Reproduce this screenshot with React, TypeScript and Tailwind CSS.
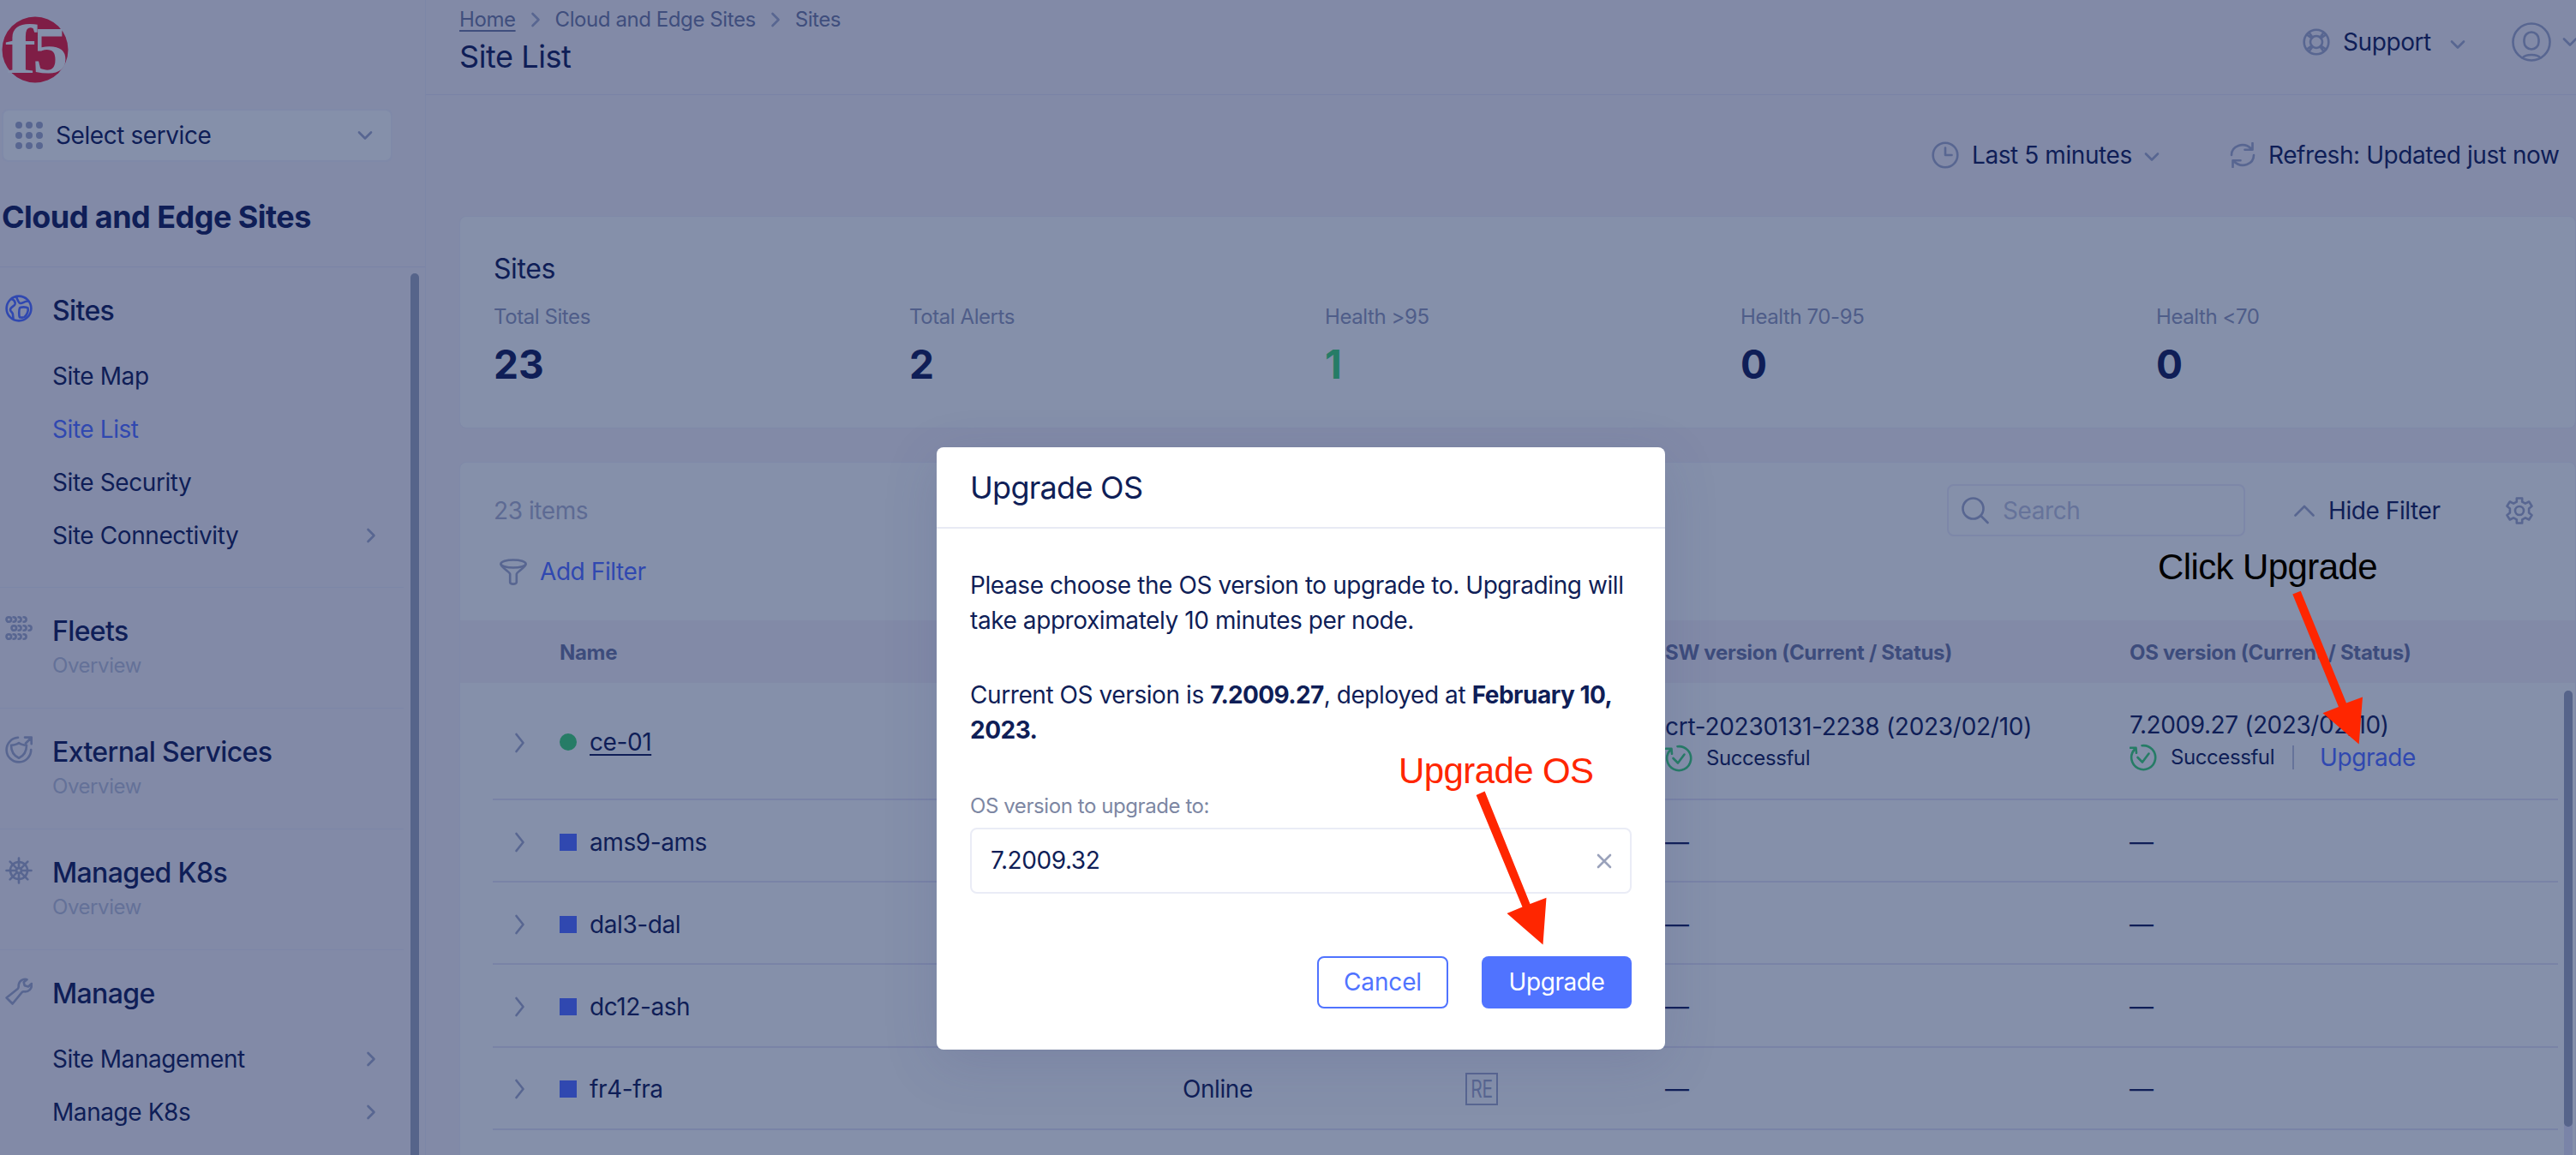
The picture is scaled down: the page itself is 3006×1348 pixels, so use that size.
import { type ReactNode } from "react";

interface IconProps {
  size?: number;
  className?: string;
  children: ReactNode;
}

const Icon = ({ size = 32, className = "text-[#586691]", children }: IconProps) => (
  <svg
    width={size}
    height={size}
    viewBox={`0 0 ${size} ${size}`}
    fill="none"
    stroke="currentColor"
    strokeWidth={2.6}
    strokeLinecap="round"
    strokeLinejoin="round"
    className={`shrink-0 ${className}`}
  >
    {children}
  </svg>
);

const ChevronDown = ({ className }: { className?: string }) => (
  <Icon size={18} className={className ?? "text-[#586691]"}>
    <path d="M2 5.5l7 7 7-7" />
  </Icon>
);

const ChevronRight = () => (
  <Icon size={18}>
    <path d="M5.5 2l7 7-7 7" />
  </Icon>
);

const ChevronExpand = () => (
  <Icon size={24}>
    <path d="M7.5 2l8 10-8 10" />
  </Icon>
);

const GlobeIcon = () => (
  <Icon className="text-[#3048b0]">
    <circle cx="16" cy="16" r="14.4" />
    <path d="M7.5 5c3 1 4.5 3 4 6-.5 2.5-5.5 3-5.5 6.5 0 2.500 3 2.500 3 5.500 0 2 .5 3 .5 5M13 2.500c1.500 3 2.500 7.500 5 7.500 3 0 3.500-2.500 9-2.500M17 15.500c1-1.500 8-1.500 9.500 0 1 3-1 8-4 10.500-1.500 1-3.500.5-5.500.5-1-2-1-9 0-11z" />
  </Icon>
);

const FleetsIcon = () => (
  <Icon>
    {[
      [3.8, 5],
      [9.8, 15],
      [3.8, 25],
    ].map(([x, y]) => (
      <g key={y} transform={`translate(${x} ${y})`}>
        <circle cx="0.5" cy="0" r="2.8" />
        <path d="M5.8-2.8c4 0 4 5.6 0 5.6M11.8-2.8c4 0 4 5.6 0 5.6M17.8-2.8c4 0 4 5.6 0 5.6" />
      </g>
    ))}
  </Icon>
);

const ExternalIcon = () => (
  <Icon>
    <path d="M15 1.800A14.300 14.300 0 1 0 30.200 16" />
    <path d="M16 8c2.500 2 5 2.500 9 2.700 0 7-2.500 12-9 15-6.500-3-9-8-9-15 4-.2 6.500-.7 9-2.700z" />
    <path d="M24 8.500l6.500-6.500M23 1.600h7.700v7.600" />
  </Icon>
);

const HelmIcon = () => (
  <Icon>
    <circle cx="16" cy="16" r="10" />
    <circle cx="16" cy="16" r="3" />
    <path d="M16 1.500V13M16 19v11.500M1.500 16H13M19 16h11.500M5.700 5.700l8.200 8.200M18.100 18.100l8.200 8.200M26.300 5.700l-8.200 8.200M13.900 18.100l-8.200 8.200" />
  </Icon>
);

const WrenchIcon = () => (
  <Icon>
    <path d="M25.500 2.200c-4-1.500-10 1.300-9.800 8.300 0 1.200-.2 1.700-1 2.500L1.600 23.500l7 7 11-13.300c.7-.8 1.300-1 2.400-.9 5.500.6 9.700-3.300 8.900-9.300l-3.900 3.500-4.300-1.200-1-4.100z" />
  </Icon>
);

const BuoyIcon = () => (
  <Icon>
    <circle cx="16" cy="16" r="14.3" />
    <circle cx="16" cy="16" r="7" />
    <path d="M5 7.500l5.500 4M7.500 5l4 5.500M27 7.500l-5.500 4M24.500 5l-4 5.500M5 24.500l5.500-4M7.500 27l4-5.500M27 24.500l-5.500-4M24.500 27l-4-5.500" />
  </Icon>
);

const UserIcon = () => (
  <Icon size={46}>
    <circle cx="23" cy="23" r="21.5" />
    <rect x="14.5" y="11.5" width="17" height="20" rx="8.5" />
    <path d="M12.500 41.500c4-4.600 17-4.600 21 0" />
  </Icon>
);

const ClockIcon = () => (
  <Icon>
    <circle cx="16" cy="16" r="14.3" />
    <path d="M16 7.500V16h7.500" />
  </Icon>
);

const RefreshIcon = () => (
  <Icon size={30}>
    <path d="M2 15C2 4.500 16-1.500 25.500 8M26.500 1v7.800h-9M28 15c0 10.500-14 16.500-23.500 7M3.500 29v-7.800h9" />
  </Icon>
);

const FunnelIcon = () => (
  <Icon>
    <ellipse cx="16" cy="7" rx="14.5" ry="4.5" />
    <path d="M1.500 7.500c0 3.500 10.700 9 10.700 11.500v9.500c0 2.800 7.600 2.800 7.600 0V19c0-2.500 10.700-8 10.700-11.500" />
  </Icon>
);

const SearchIcon = () => (
  <Icon>
    <circle cx="13.5" cy="13.5" r="12" />
    <path d="M22.500 22l8 8" />
  </Icon>
);

const GearIcon = () => (
  <Icon>
    <circle cx="16" cy="16" r="5" />
    <path d="M12.800 1.500h6.400v4.200l3.700 2 4.300-2.200 3.300 5.300-3.400 2.700v5l3.400 2.700-3.300 5.300-4.300-2.200-3.700 2v4.200h-6.400v-4.200l-3.700-2-4.300 2.200-3.300-5.300 3.400-2.700v-5l-3.400-2.700 3.300-5.300 4.300 2.200 3.700-2z" />
  </Icon>
);

const SuccessIcon = () => (
  <Icon className="text-[#267c66]">
    <path d="M14.500 2.200A14 14 0 1 1 6 6.500M1 4.800l6.500 0 .5 6" />
    <path d="M9.500 16l5.500 5.500 7.500-10" />
  </Icon>
);

const Logo = () => (
  <svg width="80" height="80" viewBox="0 0 80 80" className="shrink-0 overflow-visible">
    <circle cx="39" cy="39" r="38.5" fill="#7f1e46" />
    <g fill="#8590aa" fontFamily="Liberation Serif, serif" fontWeight="700">
      <text x="4" y="66" fontSize="80" textLength="36" lengthAdjust="spacingAndGlyphs">
        f
      </text>
      <text x="36" y="66" fontSize="79" textLength="41" lengthAdjust="spacingAndGlyphs">
        5
      </text>
    </g>
  </svg>
);

interface NavSection {
  title: string;
  icon: ReactNode;
  overview?: boolean;
  items?: { label: string; active?: boolean; nested?: boolean }[];
}

const sections: NavSection[] = [
  {
    title: "Sites",
    icon: <GlobeIcon />,
    items: [
      { label: "Site Map" },
      { label: "Site List", active: true },
      { label: "Site Security" },
      { label: "Site Connectivity", nested: true },
    ],
  },
  { title: "Fleets", icon: <FleetsIcon />, overview: true },
  { title: "External Services", icon: <ExternalIcon />, overview: true },
  { title: "Managed K8s", icon: <HelmIcon />, overview: true },
  {
    title: "Manage",
    icon: <WrenchIcon />,
    items: [
      { label: "Site Management", nested: true },
      { label: "Manage K8s", nested: true },
    ],
  },
];

const Sidebar = () => (
  <aside className="flex h-full w-[497px] shrink-0 flex-col border-r border-[#7c86a7]">
    <div className="h-[312px] shrink-0 border-b border-[#7983a6] pt-[19px]">
      <div className="pl-0.5">
        <Logo />
      </div>
      <div className="mt-7 ml-0.5 flex h-[62px] w-[456px] items-center rounded-lg border-2 border-[#7f89a8] bg-[#8590aa] pl-3.5">
        <svg width="32" height="32" viewBox="0 0 32 32" fill="#586691">
          {[4, 16, 28].map((y) =>
            [4, 16, 28].map((x) => <circle key={`${x}-${y}`} cx={x} cy={y} r="4" />)
          )}
        </svg>
        <span className="ml-[15px] flex-1">Select service</span>
        <ChevronDown className="mr-[21px] text-[#586691]" />
      </div>
      <h2 className="mt-10 ml-0.5 text-[36px] leading-[48px] font-bold tracking-[-0.015em]">
        Cloud and Edge Sites
      </h2>
    </div>

    <div className="flex min-h-0 flex-1">
      <nav className="w-[471px]">
        {sections.map((section) => (
          <div
            key={section.title}
            className={`border-b border-[#7c86a7] pt-[30px] pl-1.5 ${
              section.items ? "pb-[29px]" : "pb-[33px]"
            }`}
          >
            <div className="flex gap-[23px]">
              <span className="pt-0.5">{section.icon}</span>
              <span className="text-[32px] leading-[42px] font-medium tracking-[-0.02em]">
                {section.title}
              </span>
            </div>
            {section.overview && (
              <div className="mt-[3px] pl-[55px] text-[24px] leading-[32px] text-[#647198]">
                Overview
              </div>
            )}
            {section.items && (
              <div className="mt-6 pl-[55px]">
                {section.items.map((item) => (
                  <div key={item.label} className="flex h-[62px] items-center justify-between pr-[29px]">
                    <span className={item.active ? "text-[#3048b0]" : ""}>{item.label}</span>
                    {item.nested && <ChevronRight />}
                  </div>
                ))}
              </div>
            )}
          </div>
        ))}
      </nav>
      <div className="mt-[7px] ml-2 w-2.5 rounded-t-full bg-[#56648a]" />
    </div>
  </aside>
);

const stats = [
  { label: "Total Sites", value: "23" },
  { label: "Total Alerts", value: "2" },
  { label: "Health >95", value: "1", good: true },
  { label: "Health 70-95", value: "0" },
  { label: "Health <70", value: "0" },
];

const PageHeader = () => (
  <header className="flex h-[111px] shrink-0 justify-between border-b border-[#7983a6]">
    <div className="pt-[7px] pl-[39px]">
      <div className="flex items-center text-[24px] leading-[32px] text-[#3f4e7d]">
        <span className="underline decoration-2 underline-offset-4">Home</span>
        <span className="mx-3.5">
          <ChevronRight />
        </span>
        <span>Cloud and Edge Sites</span>
        <span className="mx-3.5">
          <ChevronRight />
        </span>
        <span>Sites</span>
      </div>
      <h1 className="mt-[3px] text-[36px] leading-[48px]">Site List</h1>
    </div>
    <div className="flex h-[98px] items-center">
      <div className="flex w-[244px] items-center gap-[15px]">
        <BuoyIcon />
        <span className="w-[110px]">Support</span>
        <ChevronDown className="mt-1.5 text-[#586691]" />
      </div>
      <div className="flex w-[75px] items-center gap-[13px]">
        <UserIcon />
        <ChevronDown />
      </div>
    </div>
  </header>
);

const StatsCard = () => (
  <section className="ml-[39px] h-[248px] shrink-0 rounded-lg border border-[#7f89a8] bg-[#8590aa] pt-[41px] pl-[39px]">
    <h3 className="text-[32px] leading-[40px]">Sites</h3>
    <div className="mt-5 flex">
      {stats.map((stat) => (
        <div key={stat.label} className="w-[485px] shrink-0">
          <div className="text-[24px] leading-[32px] text-[#4f5d89]">{stat.label}</div>
          <div
            className={`mt-[11px] text-[46px] leading-[56px] font-bold tracking-normal ${
              stat.good ? "text-[#267c66]" : ""
            }`}
          >
            {stat.value}
          </div>
        </div>
      ))}
    </div>
  </section>
);

const Status = () => (
  <div className="flex items-center">
    <SuccessIcon />
    <span className="ml-4 text-[24px] leading-[32px]">Successful</span>
  </div>
);

interface Site {
  name: string;
  status?: string;
}

const sites: Site[] = [
  { name: "ams9-ams" },
  { name: "dal3-dal" },
  { name: "dc12-ash" },
  { name: "fr4-fra", status: "Online" },
];

const rowGrid = "grid grid-cols-[78px_727px_330px_233px_542px_500px]";

const RegionBadge = () => (
  <span className="flex h-[38px] w-[38px] items-center justify-center border-2 border-[#586691] text-[28px] leading-none text-[#586691]">
    <span className="scale-x-75">RE</span>
  </span>
);

const SiteTable = () => (
  <section className="mt-[39px] ml-[39px] flex h-[820px] shrink-0 flex-col rounded-lg border border-[#7f89a8] bg-[#8590aa]">
    <div className="mt-[25px] flex h-[61px] items-center justify-between pl-[39px]">
      <span className="text-[#5d6a93]">23 items</span>
      <div className="flex items-center">
        <div className="flex h-[61px] w-[348px] items-center rounded-lg border-2 border-[#7d87a8] pl-[15px] text-[#66739a]">
          <SearchIcon />
          <span className="ml-4">Search</span>
        </div>
        <div className="ml-[57px] flex w-[247px] items-center">
          <Icon size={24}>
            <path d="M1.500 17.500L12 7l10.500 10.500" />
          </Icon>
          <span className="ml-4">Hide Filter</span>
        </div>
        <div className="w-[81px]">
          <GearIcon />
        </div>
      </div>
    </div>
    <div className="flex h-[77px] items-center pt-1 pl-[46px]">
      <FunnelIcon />
      <span className="ml-[15px] text-[#3048b0]">Add Filter</span>
    </div>

    <div
      className={`mt-[21px] h-[73px] shrink-0 items-center bg-[#828aa7] pt-0.5 pl-[38px] text-[24px] font-bold tracking-[-0.013em] text-[#3d4c7c] ${rowGrid}`}
    >
      <span className="col-start-2">Name</span>
      <span className="col-start-5">SW version (Current / Status)</span>
      <span className="col-start-6">OS version (Current / Status)</span>
    </div>

    <div className="flex min-h-0 flex-1">
      <div className="ml-[38px] w-[2410px]">
        <div className={`h-[137px] items-center overflow-hidden border-b-2 border-[#7983a6] ${rowGrid}`}>
          <span className="pt-1 pl-5">
            <ChevronExpand />
          </span>
          <span className="flex items-center pt-[3px]">
            <span className="mr-[15px] h-5 w-5 rounded-full bg-[#267c66]" />
            <span className="underline decoration-2 underline-offset-4">ce-01</span>
          </span>
          <div className="col-start-5">
            <div className="pb-0.5 leading-[38px] tracking-[-0.01em]">crt-20230131-2238 (2023/02/10)</div>
            <Status />
          </div>
          <div>
            <div className="pb-0.5 leading-[36px]">7.2009.27 (2023/02/10)</div>
            <div className="flex items-center">
              <Status />
              <span className="ml-[21px] h-7 w-0.5 bg-[#66739a]" />
              <span className="ml-[30px] leading-[36px] text-[#3048b0]">Upgrade</span>
            </div>
          </div>
        </div>
        {sites.map((site) => (
          <div
            key={site.name}
            className={`h-[96.2px] items-center border-b-2 border-[#7983a6] pt-[3px] ${rowGrid}`}
          >
            <span className="pl-5">
              <ChevronExpand />
            </span>
            <span className="flex items-center">
              <span className="mr-[15px] h-5 w-5 bg-[#3048b0]" />
              <span>{site.name}</span>
            </span>
            <span>{site.status}</span>
            <span>{site.status && <RegionBadge />}</span>
            <span>—</span>
            <span>—</span>
          </div>
        ))}
        <div className={`h-24 items-center ${rowGrid}`}>
          <span className="col-start-4">
            <RegionBadge />
          </span>
        </div>
      </div>
      <div className="mt-[9px] ml-[7px] w-2.5 rounded-t-full bg-[#7a84a8]">
        <div className="h-[509px] rounded-full bg-[#56648a]" />
      </div>
    </div>
  </section>
);

const UpgradeModal = () => (
  <div className="absolute inset-0 flex items-start justify-center pt-[522px] pl-[30px]">
    <div className="flex h-[703px] w-[850px] flex-col rounded-lg bg-white shadow-[0_16px_64px_rgba(60,70,130,0.16)]">
      <div className="flex h-[95px] shrink-0 items-center border-b-2 border-[#e8eaf4] pl-[39px] text-[36px] tracking-[-0.02em]">
        Upgrade OS
      </div>
      <div className="px-[39px] pt-[46px] leading-[41px]">
        <p className="whitespace-nowrap">
          Please choose the OS version to upgrade to. Upgrading will
          <br />
          take approximately 10 minutes per node.
        </p>
        <p className="mt-[46px] whitespace-nowrap">
          Current OS version is <b className="font-bold tracking-[-0.023em]">7.2009.27</b>, deployed at{" "}
          <b className="font-bold tracking-[-0.018em]">
            February 10,
            <br />
            2023.
          </b>
        </p>
        <div className="mt-[52px] text-[24px] leading-[32px] text-[#7d87a3]">
          OS version to upgrade to:
        </div>
        <div className="mt-[9px] flex h-[77px] items-center justify-between rounded-lg border-2 border-[#eaecf6] pr-5 pl-[22px]">
          <span>7.2009.32</span>
          <Icon size={20} className="text-[#9aa2bb]">
            <path d="M3 3l14 14M17 3L3 17" />
          </Icon>
        </div>
        <div className="mt-[73px] flex justify-end gap-[39px]">
          <button className="h-[61px] w-[153px] rounded-lg border-2 border-[#5073ff] tracking-[-0.005em] text-[#5073ff]">
            Cancel
          </button>
          <button className="h-[61px] w-[175px] rounded-lg bg-[#5073ff] text-white">Upgrade</button>
        </div>
      </div>
    </div>
  </div>
);

// Callout labels and arrows drawn over the page
const Annotations = () => (
  <svg
    className="absolute inset-0 tracking-[-0.6px]"
    width="3006"
    height="1348"
    viewBox="0 0 3006 1348"
    fontFamily="Liberation Sans, Arial, sans-serif"
    fontSize="42"
  >
    <text x="2518" y="676" fill="#000">
      Click Upgrade
    </text>
    <text x="1632" y="914" fill="#ff2600">
      Upgrade OS
    </text>
    <g fill="#ff2600">
      <path d="M2675.300 693.500L2684.700 689.700L2738 820.500L2757 813.500L2752.700 868.600L2710.500 832.300L2729 825Z" />
      <path d="M1722.600 928L1732.600 923.500L1785.500 1055L1804.500 1047.700L1800.500 1102.500L1758.500 1066L1776.500 1058.500Z" />
    </g>
  </svg>
);

export default function App() {
  return (
    <div className="relative flex h-[1348px] w-[3006px] overflow-hidden bg-[#828aa7] font-[Inter,sans-serif] text-[28px] tracking-[-0.015em] text-[#0f1e57]">
      <Sidebar />
      <main className="flex min-w-0 flex-1 flex-col">
        <PageHeader />
        <div className="flex h-[141px] shrink-0 items-center justify-end pb-0.5">
          <div className="flex w-[348px] items-center">
            <ClockIcon />
            <span className="mr-3.5 ml-[15px]">Last 5 minutes</span>
            <ChevronDown className="mt-1 text-[#586691]" />
          </div>
          <div className="flex w-[404px] items-center">
            <RefreshIcon />
            <span className="ml-[15px] whitespace-nowrap">Refresh: Updated just now</span>
          </div>
        </div>
        <StatsCard />
        <SiteTable />
      </main>
      <UpgradeModal />
      <Annotations />
    </div>
  );
}
